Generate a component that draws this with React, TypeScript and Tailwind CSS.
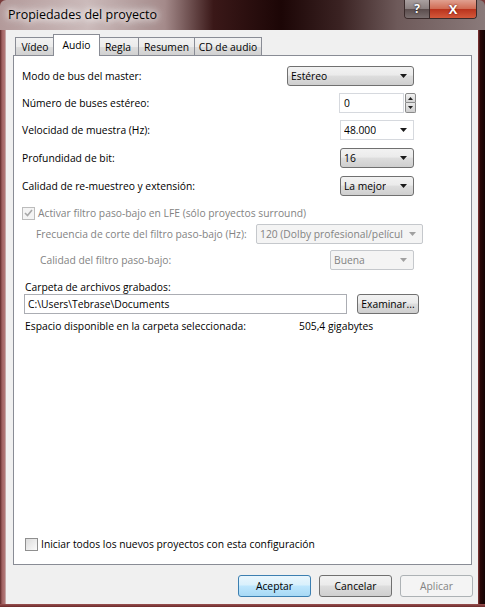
import React from 'react'

const ui = "font-['Open_Sans',sans-serif] text-[10.3px] leading-[14px] whitespace-nowrap"

function Arrow({ grey }: { grey?: boolean }) {
  return (
    <svg width="7" height="4" viewBox="0 0 7 4" className="shrink-0">
      <path d="M0 0h7L3.5 4z" fill={grey ? '#a0a0a0' : '#1a1a1a'} />
    </svg>
  )
}

function Combo({
  value,
  w,
  kind = 'button',
}: {
  value: string
  w: string
  kind?: 'button' | 'edit' | 'disabled'
}) {
  const box =
    kind === 'button'
      ? 'border-[#707070] rounded-[3px] bg-[linear-gradient(#f2f2f2,#ebebeb_45%,#dddddd_50%,#cfcfcf)] text-black'
      : kind === 'edit'
        ? 'border-[#d6d9de] bg-white text-black'
        : 'border-[#c5c8cc] rounded-[2px] bg-[#f4f4f4] text-[#838383]'
  return (
    <div className={`${w} h-[20px] border flex items-center justify-between gap-[4px] pl-[3px] pr-[6px] shrink-0 ${box}`}>
      <span className="overflow-hidden">{value}</span>
      <Arrow grey={kind === 'disabled'} />
    </div>
  )
}

function Spin() {
  return (
    <div className="flex items-center shrink-0 -mr-[2px]">
      <div className="w-[65px] h-[20px] border border-[#d6d9de] bg-white flex items-center pl-[4px]">0</div>
      <div className="ml-[1px] w-[11px] h-[20px] flex flex-col">
        <div className="h-[10px] border border-[#8a8a8a] rounded-t-[2px] bg-[linear-gradient(#f2f2f2,#d4d4d4)] flex items-center justify-center">
          <svg width="5" height="3" viewBox="0 0 5 3"><path d="M0 3h5L2.5 0z" fill="#222" /></svg>
        </div>
        <div className="h-[10px] border border-t-0 border-[#8a8a8a] rounded-b-[2px] bg-[linear-gradient(#e8e8e8,#cfcfcf)] flex items-center justify-center">
          <svg width="5" height="3" viewBox="0 0 5 3"><path d="M0 0h5L2.5 3z" fill="#222" /></svg>
        </div>
      </div>
    </div>
  )
}

function Check({ disabled, checked }: { disabled?: boolean; checked?: boolean }) {
  return (
    <div
      className={`w-[13px] h-[13px] border shrink-0 flex items-center justify-center ${
        disabled ? 'border-[#bcbcbc] bg-[#f4f4f4]' : 'border-[#8f8f8f] bg-[linear-gradient(135deg,#dcdcdc,#fbfbfb)]'
      }`}
    >
      {checked && (
        <svg width="9" height="8" viewBox="0 0 9 8">
          <path d="M1 4l2.5 2.5L8 1" stroke={disabled ? '#a8a8a8' : '#333'} strokeWidth="1.6" fill="none" />
        </svg>
      )}
    </div>
  )
}

function Btn({ children, kind = 'normal' }: { children: React.ReactNode; kind?: 'normal' | 'default' | 'disabled' }) {
  const s =
    kind === 'default'
      ? 'border-[#3c7fb1] bg-[linear-gradient(#eaf6fd,#d9f0fc_45%,#bee6fd_50%,#a7d9f5)] text-black'
      : kind === 'disabled'
        ? 'border-[#adb2b5] bg-[#f4f4f4] text-[#838383]'
        : 'border-[#707070] bg-[linear-gradient(#f2f2f2,#ebebeb_45%,#dddddd_50%,#cfcfcf)] text-black'
  return (
    <div className={`w-[73px] h-[22px] border rounded-[3px] flex items-center justify-center ${s}`}>{children}</div>
  )
}

function Tab({ label, w, active }: { label: string; w: string; active?: boolean }) {
  return (
    <div
      className={`${w} flex items-center justify-center border border-b-0 border-[#898c95] ${
        active
          ? 'h-[22px] bg-white relative z-10 -mx-[2px] pb-[2px]'
          : 'h-[19px] bg-[linear-gradient(#f2f2f2,#ebebeb_50%,#dddddd_50%,#cfcfcf)] -ml-px first:ml-0'
      }`}
    >
      {label}
    </div>
  )
}

export default function App() {
  return (
    <div className={`w-[485px] h-[607px] flex flex-col overflow-hidden bg-[#7a3c3c] ${ui}`}>
      {/* title bar */}
      <div className="h-[30px] shrink-0 flex items-start justify-between rounded-t-[6px] bg-[linear-gradient(90deg,#b39a9a_0%,#cbbaba_18%,#a48a8a_34%,#3a1818_44%,#1c0606_58%,#3a2222_70%,#6e5a5a_82%,#8a7a7a_100%)]">
        <div className="pl-[8px] pt-[6px] text-[12.5px] leading-[17px] text-black [text-shadow:0_0_6px_#fff,0_0_10px_#fff,0_0_14px_#fff]">
          Propiedades del proyecto
        </div>
        <div className="mr-[8px] flex h-[19px] border border-t-0 border-[#3a2a2a] rounded-b-[4px] overflow-hidden">
          <div className="w-[25px] flex items-center justify-center border-r border-[#3a2a2a] bg-[linear-gradient(#a9a0a0,#8a7f7f_50%,#5a4c4c_50%,#7a6e6e)] text-white font-bold text-[12px] [text-shadow:0_0_2px_#000]">
            ?
          </div>
          <div className="w-[46px] flex items-center justify-center bg-[linear-gradient(#e0a090,#d06a52_50%,#b8321c_50%,#d4583a)] text-white font-bold text-[13px] [text-shadow:0_0_2px_#500]">
            X
          </div>
        </div>
      </div>

      <div className="flex-1 flex min-h-0">
        {/* left frame */}
        <div className="w-[6px] shrink-0 bg-[linear-gradient(90deg,#5e2828,#a06262_35%,#b07575_75%,#d2c0c0)]" />

        {/* client area */}
        <div className="flex-1 min-w-0 flex flex-col bg-[#f0f0f0] pl-[7px] pr-[6px]">
          {/* tabs */}
          <div className="mt-[4px] h-[22px] flex items-end pl-[2px] -mb-px">
            <Tab label="Vídeo" w="w-[40px]" />
            <Tab label="Audio" w="w-[47px]" active />
            <Tab label="Regla" w="w-[42px]" />
            <Tab label="Resumen" w="w-[57px]" />
            <Tab label="CD de audio" w="w-[68px]" />
          </div>

          {/* panel */}
          <div className="h-[510px] min-w-0 border border-[#898c95] bg-white flex flex-col pl-[8px] pr-[57px]">
            <div className="mt-[10px] h-[20px] flex items-center justify-between">
              <span>Modo de bus del master:</span>
              <Combo value="Estéreo" w="w-[127px]" />
            </div>
            <div className="mt-[7px] h-[20px] flex items-center justify-between">
              <span>Número de buses estéreo:</span>
              <Spin />
            </div>
            <div className="mt-[7px] h-[20px] flex items-center justify-between">
              <span>Velocidad de muestra (Hz):</span>
              <Combo value="48.000" w="w-[74px]" kind="edit" />
            </div>
            <div className="mt-[8px] h-[20px] flex items-center justify-between">
              <span>Profundidad de bit:</span>
              <Combo value="16" w="w-[74px]" />
            </div>
            <div className="mt-[8px] h-[20px] flex items-center justify-between">
              <span>Calidad de re-muestreo y extensión:</span>
              <Combo value="La mejor" w="w-[74px]" />
            </div>

            <div className="mt-[7px] h-[20px] flex items-center gap-[3px] text-[#838383]">
              <Check disabled checked />
              <span>Activar filtro paso-bajo en LFE (sólo proyectos surround)</span>
            </div>
            <div className="mt-[1px] h-[20px] flex items-center justify-between text-[#838383] pl-[14px] -mr-[9px]">
              <span>Frecuencia de corte del filtro paso-bajo (Hz):</span>
              <Combo value="120 (Dolby profesional/películ" w="w-[167px]" kind="disabled" />
            </div>
            <div className="mt-[6px] h-[20px] flex items-center justify-between text-[#838383] pl-[18px]">
              <span>Calidad del filtro paso-bajo:</span>
              <Combo value="Buena" w="w-[84px]" kind="disabled" />
            </div>

            <div className="mt-[9px] h-[15px] flex items-center pl-[3px]">Carpeta de archivos grabados:</div>
            <div className="h-[20px] flex items-center pl-[2px] -mr-[52px]">
              <div className="w-[323px] h-[20px] border border-[#abadb3] bg-white flex items-center pl-[3px]">
                {'C:\\Users\\Tebrase\\Documents'}
              </div>
              <div className="ml-[10px] w-[62px] h-[20px] border border-[#707070] rounded-[3px] bg-[linear-gradient(#f2f2f2,#ebebeb_45%,#dddddd_50%,#cfcfcf)] flex items-center justify-center">
                Examinar...
              </div>
            </div>
            <div className="mt-[4px] h-[16px] flex items-center pl-[3px]">
              <span className="w-[274px]">Espacio disponible en la carpeta seleccionada:</span>
              <span>505,4 gigabytes</span>
            </div>

            <div className="flex-1" />
            <div className="mb-[13px] h-[14px] flex items-center gap-[3px] pl-[3px]">
              <Check />
              <span>Iniciar todos los nuevos proyectos con esta configuración</span>
            </div>
          </div>

          {/* buttons */}
          <div className="mt-[10px] flex justify-end gap-[8px] -mr-px">
            <Btn kind="default">Aceptar</Btn>
            <Btn>Cancelar</Btn>
            <Btn kind="disabled">Aplicar</Btn>
          </div>
        </div>

        {/* right frame */}
        <div className="w-[7px] shrink-0 bg-[linear-gradient(90deg,#8a3a3a,#2a0808_30%,#140404)]" />
      </div>

      {/* bottom frame */}
      <div className="h-[3px] shrink-0 bg-[linear-gradient(#9a5050,#6a2a2a)]" />
    </div>
  )
}
